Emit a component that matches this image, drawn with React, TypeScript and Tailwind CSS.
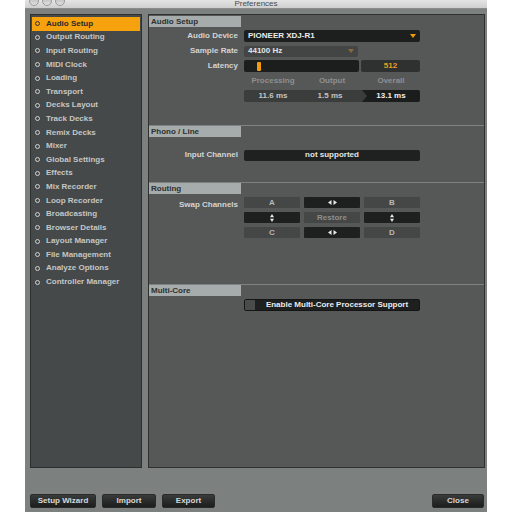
import React from 'react';

const menu = [
  'Audio Setup',
  'Output Routing',
  'Input Routing',
  'MIDI Clock',
  'Loading',
  'Transport',
  'Decks Layout',
  'Track Decks',
  'Remix Decks',
  'Mixer',
  'Global Settings',
  'Effects',
  'Mix Recorder',
  'Loop Recorder',
  'Broadcasting',
  'Browser Details',
  'Layout Manager',
  'File Management',
  'Analyze Options',
  'Controller Manager',
];

const Header: React.FC<{ title: string }> = ({ title }) => (
  <div className="border-t border-[#7e8282]">
    <div className="w-[92px] h-[11px] bg-[#a6acac] text-[#2e3030] text-[8px] font-bold leading-[11px] pl-[2px]">
      {title}
    </div>
  </div>
);

const Label: React.FC<{ children: React.ReactNode }> = ({ children }) => (
  <div className="w-[90px] text-right pr-[1px] text-[#d4d4d4] text-[8px] font-bold">{children}</div>
);

const LeftRight = () => (
  <svg width="9" height="5" viewBox="0 0 9 5">
    <path d="M0 2.5 L3.5 0 L3.5 5 Z M9 2.5 L5.5 0 L5.5 5 Z" fill="#e8e8e8" />
  </svg>
);

const UpDown = () => (
  <svg width="4" height="8" viewBox="0 0 4 8">
    <path d="M2 0 L4 3.2 L0 3.2 Z M2 8 L4 4.8 L0 4.8 Z" fill="#e8e8e8" />
  </svg>
);

const Cell: React.FC<{ dark?: boolean; children: React.ReactNode }> = ({ dark, children }) => (
  <div
    className={
      'w-[56px] h-[11px] rounded-[1px] flex items-center justify-center text-[8px] font-bold ' +
      (dark ? 'bg-[#1e1f1f] text-[#e8e8e8]' : 'bg-[#454646] text-[#b8b8b8]')
    }
  >
    {children}
  </div>
);

const BottomButton: React.FC<{ w: string; children: React.ReactNode }> = ({ w, children }) => (
  <button
    className={
      w +
      ' h-[14px] rounded-[2px] bg-gradient-to-b from-[#3a3b3b] to-[#1c1d1d] border border-[#2a2a2a] text-[#d8d8d8] text-[8px] font-bold flex items-center justify-center'
    }
  >
    {children}
  </button>
);

export default function App() {
  return (
    <div className="w-[512px] h-[512px] bg-white overflow-hidden" style={{ fontFamily: '"Liberation Sans", Arial, sans-serif' }}>
      <div className="ml-[25px] w-[462px] h-[512px] flex flex-col bg-[#7c8180]">
        {/* title bar */}
        <div className="h-[9px] bg-gradient-to-b from-[#e4e4e4] to-[#cfcfcf] border-b border-[#8a8a8a] relative flex items-end justify-center">
          <div className="absolute left-[4px] top-[-4px] flex gap-[3px]">
            <div className="w-[10px] h-[10px] rounded-full bg-gradient-to-b from-[#b8b8b8] to-[#e0e0e0] border border-[#9a9a9a]" />
            <div className="w-[10px] h-[10px] rounded-full bg-gradient-to-b from-[#b8b8b8] to-[#e0e0e0] border border-[#9a9a9a]" />
            <div className="w-[10px] h-[10px] rounded-full bg-gradient-to-b from-[#b8b8b8] to-[#e0e0e0] border border-[#9a9a9a]" />
          </div>
          <span className="text-[8px] leading-[8px] text-[#4a4a4a]">Preferences</span>
        </div>

        <div className="flex gap-[6px] pl-[5px] pr-[2px] pt-[5px] h-[459px]">
          {/* sidebar */}
          <div className="w-[112px] h-full bg-[#464949] border border-[#2e3030] pt-[2px] px-[1px]">
            {menu.map((m, i) => (
              <div
                key={m}
                className={
                  'h-[13.6px] flex items-center gap-[6px] pl-[3px] text-[8px] font-bold ' +
                  (i === 0 ? 'bg-[#f6a20f] text-[#2a2a2a]' : 'text-[#c4c6c6]')
                }
              >
                <div
                  className={
                    'w-[5px] h-[5px] rounded-full border-[1.5px] ' +
                    (i === 0 ? 'border-[#333]' : 'border-[#d0d0d0]')
                  }
                />
                <span>{m}</span>
              </div>
            ))}
          </div>

          {/* main panel */}
          <div className="flex-1 h-full bg-[#565757] border border-[#2e3030] flex flex-col">
            {/* Audio Setup */}
            <div className="h-[110px]">
              <div className="w-[92px] h-[11px] mt-[1px] bg-[#a6acac] text-[#2e3030] text-[8px] font-bold leading-[11px] pl-[2px]">
                Audio Setup
              </div>
              <div className="flex flex-col gap-[3px] mt-[3px]">
                <div className="flex items-center gap-[5px]">
                  <Label>Audio Device</Label>
                  <div className="w-[176px] h-[12px] bg-[#1d1e1e] rounded-[2px] flex items-center justify-between px-[4px]">
                    <span className="text-[8px] font-bold text-[#ececec]">PIONEER XDJ-R1</span>
                    <svg width="6" height="4" viewBox="0 0 6 4">
                      <path d="M0 0 L6 0 L3 4 Z" fill="#f29a10" />
                    </svg>
                  </div>
                </div>
                <div className="flex items-center gap-[5px]">
                  <Label>Sample Rate</Label>
                  <div className="w-[114px] h-[11px] bg-[#434444] rounded-[2px] flex items-center justify-between px-[4px]">
                    <span className="text-[8px] font-bold text-[#e4e4e4]">44100 Hz</span>
                    <svg width="6" height="4" viewBox="0 0 6 4">
                      <path d="M0 0 L6 0 L3 4 Z" fill="#8a6a3a" />
                    </svg>
                  </div>
                </div>
                <div className="flex items-center gap-[5px]">
                  <Label>Latency</Label>
                  <div className="flex gap-[2px]">
                    <div className="w-[115px] h-[12px] bg-[#1c1d1d] rounded-[2px] flex items-center pl-[13px]">
                      <div className="w-[4px] h-[9px] bg-[#f59a0c] rounded-[1px]" />
                    </div>
                    <div className="w-[59px] h-[12px] bg-[#2f3030] rounded-[2px] flex items-center justify-center text-[8px] font-bold text-[#e8a020]">
                      512
                    </div>
                  </div>
                </div>
                <div className="flex ml-[95px] w-[176px] text-[8px] text-[#8e9090] font-bold h-[12px] items-center">
                  <span className="w-[58px] text-center">Processing</span>
                  <span className="w-[60px] text-center">Output</span>
                  <span className="w-[58px] text-center">Overall</span>
                </div>
                <div className="flex ml-[95px] w-[176px] h-[12px] rounded-[2px] overflow-hidden">
                  <div className="w-[118px] bg-[#3b3c3c] flex items-center text-[8px] font-bold text-[#c4c4c4]">
                    <span className="w-[58px] text-center">11.6 ms</span>
                    <span className="w-[56px] text-center">1.5 ms</span>
                  </div>
                  <div className="flex-1 bg-[#1b1c1c] flex items-center justify-center text-[8px] font-bold text-[#f0f0f0] relative">
                    <svg className="absolute left-0 top-0" width="5" height="12" viewBox="0 0 5 12">
                      <path d="M0 0 L5 6 L0 12 Z" fill="#3b3c3c" />
                    </svg>
                    13.1 ms
                  </div>
                </div>
              </div>
            </div>

            {/* Phono / Line */}
            <div className="h-[57px]">
              <Header title="Phono / Line" />
              <div className="flex items-center gap-[5px] mt-[12px]">
                <Label>Input Channel</Label>
                <div className="w-[176px] h-[11px] bg-[#1f2020] rounded-[2px] flex items-center justify-center text-[8px] font-bold text-[#e4e4e4]">
                  not supported
                </div>
              </div>
            </div>

            {/* Routing */}
            <div className="h-[102px]">
              <Header title="Routing" />
              <div className="flex gap-[5px] mt-[3px]">
                <div className="pt-[2px]">
                  <Label>Swap Channels</Label>
                </div>
                <div className="grid grid-cols-3 gap-x-[4px] gap-y-[4px] w-[176px]">
                  <Cell>A</Cell>
                  <Cell dark>
                    <LeftRight />
                  </Cell>
                  <Cell>B</Cell>
                  <Cell dark>
                    <UpDown />
                  </Cell>
                  <Cell>
                    <span className="text-[#8e8e8e]">Restore</span>
                  </Cell>
                  <Cell dark>
                    <UpDown />
                  </Cell>
                  <Cell>C</Cell>
                  <Cell dark>
                    <LeftRight />
                  </Cell>
                  <Cell>D</Cell>
                </div>
              </div>
            </div>

            {/* Multi-Core */}
            <div>
              <Header title="Multi-Core" />
              <div className="flex mt-[3px] ml-[95px]">
                <div className="w-[176px] h-[12px] bg-[#1e1f1f] rounded-[2px] flex items-center border border-[#141414]">
                  <div className="w-[10px] h-[10px] bg-[#4a4b4b]" />
                  <span className="flex-1 text-center text-[8px] font-bold text-[#ececec]">
                    Enable Multi-Core Processor Support
                  </span>
                </div>
              </div>
            </div>
          </div>
        </div>

        {/* bottom buttons */}
        <div className="flex items-center pl-[5px] pr-[3px] mt-[26px]">
          <div className="flex gap-[6px]">
            <BottomButton w="w-[66px]">Setup Wizard</BottomButton>
            <BottomButton w="w-[54px]">Import</BottomButton>
            <BottomButton w="w-[53px]">Export</BottomButton>
          </div>
          <div className="ml-auto">
            <BottomButton w="w-[52px]">Close</BottomButton>
          </div>
        </div>
      </div>
    </div>
  );
}
